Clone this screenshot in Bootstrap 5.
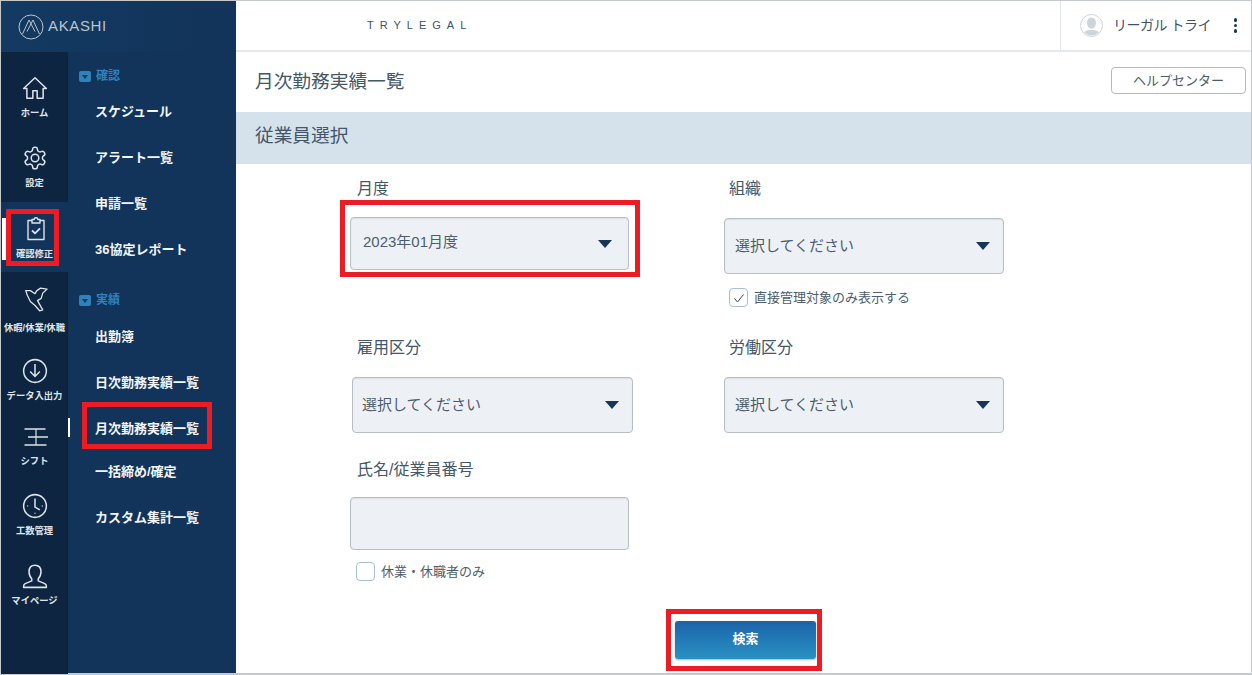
<!DOCTYPE html>
<html lang="ja">
<head>
<meta charset="utf-8">
<title>月次勤務実績一覧</title>
<link rel="stylesheet" href="https://cdn.jsdelivr.net/npm/bootstrap@5.3.0/dist/css/bootstrap.min.css">
<style>
html,body{height:100%;overflow:hidden;background:#fff}
body{font-family:"Liberation Sans","Noto Sans CJK JP",sans-serif;color:#43566a}
.app-frame{position:relative;width:1252px;height:675px;border:1px solid #c6c9cb;border-bottom-width:2px}
.side-wrap{width:235px;background:#12335a;flex:none}
.logo-strip{height:51px;background:linear-gradient(90deg,#133a61,#12335a);color:#b9c4ce;font-size:15px;letter-spacing:.65px;padding-left:17px}
.logo-strip svg{margin-right:4px}
.rail-col{width:67px;background:#0d2540;padding-top:10px;height:622px;flex:none;position:relative}
.rail-col::before{content:"";position:absolute;left:0;right:0;top:150px;height:70px;background:#12335a}
.rail-entry{position:relative;height:70px;display:flex;flex-direction:column;align-items:center;color:#dfe5ea;font-size:9.3px;font-weight:700;white-space:nowrap;padding-top:13px}
.rail-entry svg{height:26px;width:26px;flex:none;margin-bottom:6px;fill:none;stroke:#dde3e8;stroke-width:1.4}
.rail-entry:nth-child(2){height:71px}
.rail-entry:nth-child(4){height:72px}
.rail-entry:nth-child(5){height:66px}
.rail-entry:nth-child(6){height:69px}
.rail-entry.is-current::before{content:"";position:absolute;left:1px;top:15px;width:4px;height:42px;background:#fff}
.rail-entry:nth-child(4) svg{margin-bottom:10px}
.rail-entry:nth-child(6) svg{margin-bottom:5px}
.sub-col{flex:1;padding-top:14px;position:relative}
.sub-head{display:flex;align-items:center;gap:5px;padding-left:11px;color:#2f83bd;font-size:12px;font-weight:700;height:20px}
.sub-head i{display:block;width:12px;height:11px;border-radius:2px;background:#2f83bd;position:relative}
.sub-head i::after{content:"";position:absolute;left:3px;top:4px;border:3px solid transparent;border-top:4px solid #12335a;border-bottom:0}
.sub-list .nav-link{color:#f2f5f7;font-size:13px;font-weight:700;padding:0 0 0 27px;height:46px;display:flex;align-items:center;position:relative}
.sub-list .nav-link.is-current::before{content:"";position:absolute;left:0;top:12px;width:2px;height:19px;background:#fff}
.sub-list .shorter{margin-top:-3px}
.sub-gap{margin-top:17px}
.sub-list-first{margin-top:3px}
.sub-list-second{margin-top:4px}
.top-strip{height:51px;border-bottom:2px solid #e4e8eb}
.org-name{font-size:11px;letter-spacing:6px;padding-left:131px;color:#3a5370}
.user-box{width:191px;height:49px;border-left:1px solid #e4e8eb;padding-left:19px;font-size:14px;color:#3f5368;letter-spacing:-.5px}
.avatar-dot{margin-right:10px}
.more-dots{margin-left:auto;margin-right:14px;display:flex;flex-direction:column;gap:2px}
.more-dots i{display:block;width:3.5px;height:3.5px;border-radius:50%;background:#1c3653}
.title-row{height:60px;padding:0 5px 0 19px}
.page-name{font-size:18.7px;font-weight:400;margin:0;color:#43566a}
.help-btn{--bs-btn-padding-y:0;--bs-btn-padding-x:0;width:135px;height:27px;font-size:13px;color:#4a5c6e;border:1px solid #a8bccb;border-radius:4px;background:#fff;margin-top:-3px}
.band{height:52px;background:#d5e2eb;padding:0 0 3px 19px;font-size:18.7px;color:#43566a;display:flex;align-items:center}
.form-area{padding:14px 0 0 114px}
.form-grid{display:grid;grid-template-columns:374px 280px;grid-template-rows:159px 122px 162px}
.fld-label{display:block;font-size:16px;line-height:22px;margin:0;padding-left:7px;color:#43566a}
.right-col .fld-label{padding-left:5px}
.fld-select{height:56px;width:280px;margin-top:18px;background-color:#edf1f5;border:1px solid #b7bec5;border-radius:4px;font-size:15px;color:#4d5d6d;padding:0 36px 0 10px;box-shadow:inset 0 1px 1px rgba(0,0,0,.08);background-size:14px 8px;background-position:right 13px center;background-image:url("data:image/svg+xml,%3Csvg xmlns='http://www.w3.org/2000/svg' viewBox='0 0 14 8'%3E%3Cpath d='M0 0h14L7 8z' fill='%23173556'/%3E%3C/svg%3E")}
.sel-month{height:53px;margin-top:17px;width:279px;padding-left:12px;padding-bottom:2px;background-position:right 16px center}
.sel-shift{margin-left:2px;width:281px;padding-left:9px}
.right-col .sel-org{margin-top:18px}
.name-input{height:53px;width:279px;margin-top:16px;background:#edf1f5;border:1px solid #b7bec5;border-radius:4px;box-shadow:inset 0 1px 1px rgba(0,0,0,.08)}
.chk-row{display:flex;align-items:center;margin:14px 0 0 5px;min-height:0;padding:0;font-size:13px;color:#4d5d6d;gap:6px;height:19px}
.chk-row.second{margin:12px 0 0 6px}
.chk-row .form-check-input{width:19px;height:19px;margin:0;float:none;flex:none;border:1.5px solid #a7bfd2;border-radius:4px;background-color:#fff;box-shadow:none}
.chk-row .form-check-input:checked{background-size:12px 12px;background-image:url("data:image/svg+xml,%3Csvg xmlns='http://www.w3.org/2000/svg' viewBox='0 0 12 12'%3E%3Cpath d='M1.5 6.5 4.5 10 10.500 2.500' fill='none' stroke='%23445' stroke-width='1'/%3E%3C/svg%3E")}
.chk-row .form-check-label{margin:0}
.search-row{padding-left:325px}
.search-btn{--bs-btn-padding-y:0;width:141px;height:38px;border:0;border-radius:3px;background:linear-gradient(180deg,#1b63a8,#2992c4);color:#fff;font-size:13px;font-weight:700;box-shadow:0 1px 2px rgba(0,0,0,.3);padding-bottom:2px}
.red-mark{position:absolute;border:5px solid #ed1c24;pointer-events:none}
.m1{left:5px;top:208px;width:53px;height:57px}
.m2{left:81px;top:401px;width:130px;height:47px}
.m3{left:339px;top:199px;width:300px;height:77px}
.m4{left:665px;top:608px;width:156px;height:62px}
</style>
</head>
<body class="m-0">
<div class="app-frame d-flex">
  <aside class="side-wrap">
    <div class="logo-strip d-flex align-items-center">
      <svg width="26" height="26" viewBox="0 0 26 26" fill="none" stroke="#b9c4ce" stroke-width="1"><circle cx="13" cy="13" r="12"/><path d="M4.500 20 11 6l6 11.500M21.500 20 15 6 9 17.500"/></svg>
      <span>AKASHI</span>
    </div>
    <div class="d-flex">
      <nav class="rail-col">
        <div class="rail-entry">
          <svg viewBox="0 0 24 24"><path d="M12 2.500 1.500 12.500h3v9h5.500v-7h4v7h5.500v-9h3z" stroke-linejoin="round"/></svg>
          <span>ホーム</span>
        </div>
        <div class="rail-entry">
          <svg viewBox="0 0 24 24"><path d="M12.220 2h-.44a2 2 0 0 0-2 2v.18a2 2 0 0 1-1 1.730l-.43.25a2 2 0 0 1-2 0l-.15-.08a2 2 0 0 0-2.730.73l-.22.38a2 2 0 0 0 .73 2.730l.15.1a2 2 0 0 1 1 1.720v.51a2 2 0 0 1-1 1.740l-.15.09a2 2 0 0 0-.73 2.730l.22.38a2 2 0 0 0 2.730.73l.15-.08a2 2 0 0 1 2 0l.43.25a2 2 0 0 1 1 1.730V20a2 2 0 0 0 2 2h.44a2 2 0 0 0 2-2v-.18a2 2 0 0 1 1-1.730l.43-.25a2 2 0 0 1 2 0l.15.08a2 2 0 0 0 2.730-.73l.22-.39a2 2 0 0 0-.73-2.730l-.15-.08a2 2 0 0 1-1-1.740v-.5a2 2 0 0 1 1-1.740l.15-.09a2 2 0 0 0 .73-2.730l-.22-.38a2 2 0 0 0-2.730-.73l-.15.08a2 2 0 0 1-2 0l-.43-.25a2 2 0 0 1-1-1.730V4a2 2 0 0 0-2-2z"/><circle cx="12" cy="12" r="3.500"/></svg>
          <span>設定</span>
        </div>
        <div class="rail-entry is-current">
          <svg viewBox="0 0 26 26" stroke-linejoin="round"><path d="M10 4.500H6v19h16v-19h-4"/><path d="M10 7V3.500h2.200a1.800 1.800 0 0 1 3.600 0H18V7z"/><path d="M10 14.500l3 2.800 5-5" stroke-width="1.800"/></svg>
          <span>確認修正</span>
        </div>
        <div class="rail-entry">
          <svg viewBox="7 5 26 28" stroke-linejoin="round" stroke-linecap="round" stroke-width="1.500"><path d="M10 10h5l5 3.300 2-3.300 4-2.700 7 1-4.700 4.400-1.600 5.600-4 2.400 5.600 10-3.300 1-5-5.700-5-4.300-3.300-6.700z"/></svg>
          <span>休暇/休業/休職</span>
        </div>
        <div class="rail-entry">
          <svg viewBox="0 0 24 24"><circle cx="12" cy="12" r="10.500"/><path d="M12 5.500v11.500M7.500 12.500 12 17l4.500-4.500"/></svg>
          <span>データ入出力</span>
        </div>
        <div class="rail-entry">
          <svg viewBox="0 0 26 26" stroke-width="2" stroke="#fff"><path d="M2.500 5h21M6 13h20M2.500 21h22"/><path d="M14 5v16" stroke-width="1.200"/></svg>
          <span>シフト</span>
        </div>
        <div class="rail-entry">
          <svg viewBox="0 0 24 24"><circle cx="12" cy="12" r="10.500"/><path d="M12 5v8l4.500 2.500"/><path d="M5.200 11.500v1M18.800 11.500v1M12 18.200v1" stroke-width="1.200"/></svg>
          <span>工数管理</span>
        </div>
        <div class="rail-entry">
          <svg viewBox="0 0 24 24" stroke-linejoin="round"><path d="M12 2c-3.500 0-5.500 2.500-5.500 6 0 3 1 5 2.500 6.500v2l-6 2.500c-1 .5-1.500 1.500-1.500 2.500v1h21v-1c0-1-.5-2-1.500-2.500l-6-2.500v-2c1.500-1.500 2.500-3.500 2.500-6.500 0-3.500-2-6-5.500-6z"/></svg>
          <span>マイページ</span>
        </div>
      </nav>
      <div class="sub-col">
        <div class="sub-head"><i></i><span>確認</span></div>
        <div class="nav flex-column sub-list sub-list-first">
          <a class="nav-link" href="#">スケジュール</a>
          <a class="nav-link" href="#">アラート一覧</a>
          <a class="nav-link" href="#">申請一覧</a>
          <a class="nav-link" href="#">36協定レポート</a>
        </div>
        <div class="sub-head sub-gap"><i></i><span>実績</span></div>
        <div class="nav flex-column sub-list sub-list-second">
          <a class="nav-link" href="#">出勤簿</a>
          <a class="nav-link" href="#">日次勤務実績一覧</a>
          <a class="nav-link is-current" href="#">月次勤務実績一覧</a>
          <a class="nav-link shorter" href="#">一括締め/確定</a>
          <a class="nav-link" href="#">カスタム集計一覧</a>
        </div>
      </div>
    </div>
  </aside>
  <main class="flex-grow-1">
    <header class="top-strip d-flex align-items-center justify-content-between">
      <div class="org-name">TRYLEGAL</div>
      <div class="user-box d-flex align-items-center">
        <svg class="avatar-dot" width="23" height="23" viewBox="0 0 23 23"><defs><clipPath id="ava"><circle cx="11.500" cy="11.500" r="10"/></clipPath></defs><circle cx="11.500" cy="11.500" r="11" fill="#fff" stroke="#cdd5dc" stroke-width="1"/><g clip-path="url(#ava)" fill="#cdd5dc"><ellipse cx="11.500" cy="9" rx="4.500" ry="5.500"/><path d="M2 23c0-5 4-7 9.500-7s9.500 2 9.500 7z"/></g></svg>
        <span>リーガル トライ</span>
        <div class="more-dots"><i></i><i></i><i></i></div>
      </div>
    </header>
    <div class="title-row d-flex align-items-center justify-content-between">
      <h1 class="page-name">月次勤務実績一覧</h1>
      <button type="button" class="btn help-btn">ヘルプセンター</button>
    </div>
    <div class="band">従業員選択</div>
    <form class="form-area">
      <div class="form-grid">
        <div>
          <label class="fld-label">月度</label>
          <select class="form-select fld-select sel-month"><option>2023年01月度</option></select>
        </div>
        <div class="right-col">
          <label class="fld-label">組織</label>
          <select class="form-select fld-select sel-org"><option>選択してください</option></select>
          <div class="form-check chk-row">
            <input class="form-check-input" type="checkbox" checked id="c1">
            <label class="form-check-label" for="c1">直接管理対象のみ表示する</label>
          </div>
        </div>
        <div>
          <label class="fld-label">雇用区分</label>
          <select class="form-select fld-select sel-shift"><option>選択してください</option></select>
        </div>
        <div class="right-col">
          <label class="fld-label">労働区分</label>
          <select class="form-select fld-select"><option>選択してください</option></select>
        </div>
        <div>
          <label class="fld-label">氏名/従業員番号</label>
          <input class="form-control name-input" type="text">
          <div class="form-check chk-row second">
            <input class="form-check-input" type="checkbox" id="c2">
            <label class="form-check-label" for="c2">休業・休職者のみ</label>
          </div>
        </div>
      </div>
      <div class="search-row"><button type="button" class="btn search-btn">検索</button></div>
    </form>
  </main>
  <div class="red-mark m1"></div>
  <div class="red-mark m2"></div>
  <div class="red-mark m3"></div>
  <div class="red-mark m4"></div>
</div>
<script src="https://cdn.jsdelivr.net/npm/bootstrap@5.3.0/dist/js/bootstrap.bundle.min.js"></script>
</body>
</html>
